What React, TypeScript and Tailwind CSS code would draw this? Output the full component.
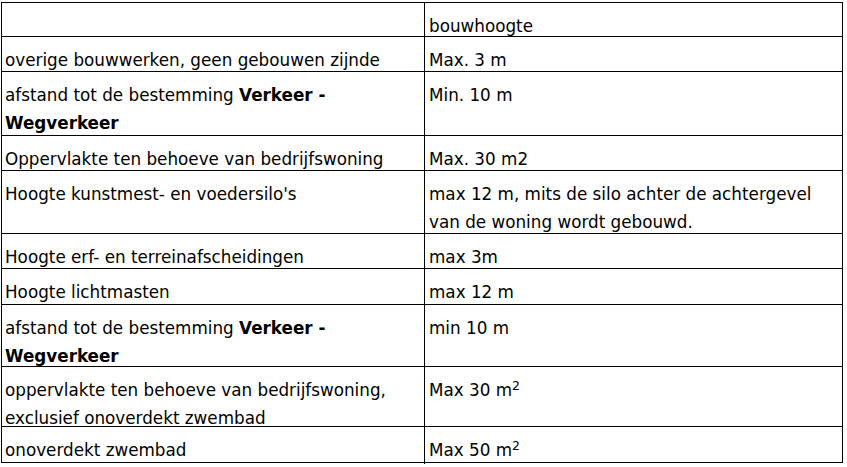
import React from 'react';

type Row = {
  h: string;
  left: React.ReactNode;
  right: React.ReactNode;
};

const Sq = () => <sup className="text-[12.5px] top-[-6px]">2</sup>;

const rows: Row[] = [
  { h: 'h-[34px]', left: '', right: 'bouwhoogte' },
  { h: 'h-[35px]', left: 'overige bouwwerken, geen gebouwen zijnde', right: 'Max. 3 m' },
  {
    h: 'h-[64px]',
    left: (
      <>
        afstand tot de bestemming <b>Verkeer -</b>
        <br />
        <b>Wegverkeer</b>
      </>
    ),
    right: 'Min. 10 m',
  },
  { h: 'h-[35px]', left: 'Oppervlakte ten behoeve van bedrijfswoning', right: 'Max. 30 m2' },
  {
    h: 'h-[63px]',
    left: "Hoogte kunstmest- en voedersilo's",
    right: (
      <>
        max 12 m, mits de silo achter de achtergevel
        <br />
        van de woning wordt gebouwd.
      </>
    ),
  },
  { h: 'h-[35px]', left: 'Hoogte erf- en terreinafscheidingen', right: 'max 3m' },
  { h: 'h-[36px]', left: 'Hoogte lichtmasten', right: 'max 12 m' },
  {
    h: 'h-[62px]',
    left: (
      <>
        afstand tot de bestemming <b>Verkeer -</b>
        <br />
        <b>Wegverkeer</b>
      </>
    ),
    right: 'min 10 m',
  },
  {
    h: 'h-[60px]',
    left: (
      <>
        oppervlakte ten behoeve van bedrijfswoning,
        <br />
        exclusief onoverdekt zwembad
      </>
    ),
    right: (
      <>
        Max 30 m<Sq />
      </>
    ),
  },
  {
    h: 'h-[36px]',
    left: 'onoverdekt zwembad',
    right: (
      <>
        Max 50 m<Sq />
      </>
    ),
  },
];

export default function App() {
  return (
    <div className="min-h-screen bg-white pt-[2px] pl-[1px]">
      <div
        className="w-[842px] border-t border-l border-r border-black text-[16.8px] leading-[28px] text-black"
        style={{ fontFamily: '"DejaVu Sans", Verdana, sans-serif' }}
      >
        {rows.map((r, i) => (
          <div key={i} className={`grid grid-cols-[423px_1fr] border-b border-black ${r.h}`}>
            <div className="border-r border-black pl-[3px] pt-[9px] whitespace-nowrap">{r.left}</div>
            <div className="pl-[4px] pt-[9px] whitespace-nowrap">{r.right}</div>
          </div>
        ))}
      </div>
    </div>
  );
}
